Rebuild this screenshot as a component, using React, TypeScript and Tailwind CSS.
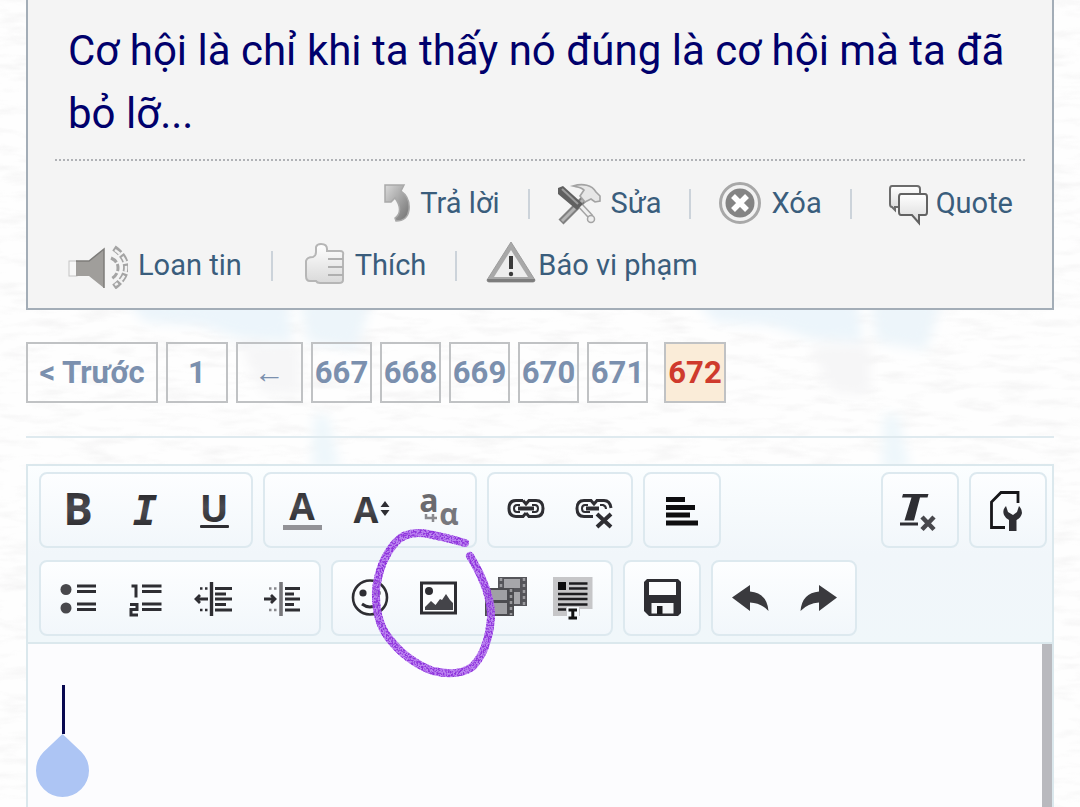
import React from "react";

const INK = "#2e2e33";

function PaperBackground() {
  return (
    <svg aria-hidden="true" className="pointer-events-none absolute inset-0 h-full w-full">
      <defs>
        <filter id="fibre" x="0" y="0" width="100%" height="100%">
          <feTurbulence type="fractalNoise" baseFrequency="0.026 0.11" numOctaves="3" seed="7" />
          <feColorMatrix values="0 0 0 0 0.6  0 0 0 0 0.59  0 0 0 0 0.6  1 0 0 0 -0.46" />
        </filter>
        <filter id="soft" x="-20%" y="-20%" width="140%" height="140%">
          <feGaussianBlur stdDeviation="6" />
        </filter>
      </defs>
      <rect width="100%" height="100%" fill="#fefefe" />
      <rect width="100%" height="100%" filter="url(#fibre)" opacity="0.4" />
      {[0, 570].map((dx) => (
        <g key={dx} transform={`translate(${dx} 0)`} filter="url(#soft)">
          <path d="M125 300H288L292 342L240 338L200 325L145 322Z" fill="#ecf5fb" />
          <path d="M300 300H372L356 350L307 342Z" fill="#edf5fa" />
          <path d="M240 345H300V395L262 392Z" fill="#f6f6f7" />
          <path d="M314 415H328L340 470H312Z" fill="#eef7fb" />
        </g>
      ))}
    </svg>
  );
}

const shade = (
  <svg aria-hidden="true" className="absolute h-0 w-0">
    <defs>
      <linearGradient id="steel" x1="0" y1="0" x2="1" y2="1">
        <stop offset="0" stopColor="#dadada" />
        <stop offset="1" stopColor="#6f6f6f" />
      </linearGradient>
      <linearGradient id="pale" x1="0" y1="0" x2="0" y2="1">
        <stop offset="0" stopColor="#ffffff" />
        <stop offset="1" stopColor="#d9d9d9" />
      </linearGradient>
      <linearGradient id="glyph" x1="0" y1="0" x2="0" y2="1">
        <stop offset="0" stopColor="#1e1e20" />
        <stop offset="0.5" stopColor="#4a4a50" />
        <stop offset="1" stopColor="#1e1e20" />
      </linearGradient>
    </defs>
  </svg>
);

function ReplyIcon() {
  return (
    <svg aria-hidden="true" width="28" height="48" viewBox="0 0 28 48">
      <path d="M3 6H22L19 12C25 16 28 22 27 31C26 38 22 42 14 42L13 39C19 35 19 27 13 19L9 23H3Z" fill="url(#steel)" stroke="#a9a9a9" strokeWidth="1.5" />
    </svg>
  );
}

function ToolsIcon() {
  return (
    <svg aria-hidden="true" width="43" height="48" viewBox="0 0 43 48">
      <path d="M28 18L3 43" stroke="#808080" strokeWidth="7" />
      <path d="M27 19L4 42" stroke="#b4b4b4" strokeWidth="3" />
      <path d="M15 7C25 4 34 6 38 13L42 17L42 22L37 23L33 20L27 23L22 17L26 11C23 8 19 8 15 7Z" fill="#e6e6e6" stroke="#a3a3a3" strokeWidth="1.6" />
      <path d="M20 24L33 38" stroke="#a3a3a3" strokeWidth="6" />
      <path d="M20 24L33 38" stroke="#f0f0f0" strokeWidth="3" />
      <circle cx="33" cy="40" r="3.5" fill="#efefef" stroke="#a3a3a3" strokeWidth="1.5" />
      <path d="M0 9L5 7L25 25L19 31L0 15Z" fill="#606060" />
      <path d="M4 10L20 25" stroke="#9c9c9c" strokeWidth="2" />
    </svg>
  );
}

function DeleteIcon() {
  return (
    <svg aria-hidden="true" width="42" height="48" viewBox="0 0 42 48">
      <circle cx="21" cy="24" r="19.5" fill="#f2f2f2" stroke="#a8a8a8" strokeWidth="3" />
      <circle cx="21" cy="24" r="14.5" fill="#848484" />
      <path d="M14 17L28 31M28 17L14 31" stroke="#fff" strokeWidth="5.5" />
    </svg>
  );
}

function QuoteIcon() {
  return (
    <svg aria-hidden="true" width="48" height="48" viewBox="0 0 48 48">
      <path d="M12 7H37Q40 7 40 10V28H15L15 31L12 28Q10 28 10 25V10Q10 7 12 7Z" fill="url(#pale)" stroke="#6c6c6c" strokeWidth="2" />
      <path d="M21 15H45Q47 15 47 18V33Q47 36 45 36H39V44L32 36H21Q19 36 19 33V18Q19 15 21 15Z" fill="url(#pale)" stroke="#626262" strokeWidth="2" />
    </svg>
  );
}

function SpeakerIcon() {
  return (
    <svg aria-hidden="true" width="60" height="48" viewBox="0 0 60 48">
      <rect x="1" y="20" width="8" height="15" fill="#f7f7f7" stroke="#c4c4c4" />
      <path d="M8 20H21L36 8V47L21 35H8Z" fill="#a09e9b" />
      <path d="M8 20H21L36 8V47" fill="none" stroke="#7d7c7a" strokeWidth="1.5" />
      <g fill="none" stroke="#a4a4a4">
        <path d="M43 17Q50 20 50 27Q50 34 43 38" strokeWidth="3" strokeDasharray="7 2" />
        <path d="M46 7Q59 16 58 28Q57 38 46 46" strokeWidth="6" strokeDasharray="8 2" />
        <path d="M47 9Q59 17 58 28Q57 38 47 44" strokeWidth="2.5" stroke="#f2f2f2" strokeDasharray="6 4" />
      </g>
    </svg>
  );
}

function ThumbIcon() {
  return (
    <svg aria-hidden="true" width="43" height="48" viewBox="0 0 43 48">
      <path d="M4 20Q5 16 11 16Q14 15 14 11V6Q15 3 19 3Q25 3 25 8V10H38Q42 10 41 14V39Q41 42 37 42H18Q15 42 14 40H8Q4 40 4 35Z" fill="url(#pale)" stroke="#b6b6b6" strokeWidth="2" />
      <path d="M26 18H41M26 26H41M26 34H41" stroke="#b0b0b0" strokeWidth="2" />
    </svg>
  );
}

function WarningIcon() {
  return (
    <svg aria-hidden="true" width="50" height="48" viewBox="0 0 50 48">
      <path d="M25 1L49 39Q49 41 47 41H3Q1 41 1 39Z" fill="#a8a8a8" stroke="#9c9c9c" strokeWidth="1" />
      <path d="M1 38H49Q49 41 47 41H3Q1 41 1 38Z" fill="#7d7d7d" />
      <path d="M25 9L42 36H8Z" fill="#ededed" />
      <path d="M25 15V28" stroke="#3a3a3a" strokeWidth="4" />
      <circle cx="25" cy="33" r="2.2" fill="#3a3a3a" />
    </svg>
  );
}

function Action({ icon, label, gap = "gap-2.5" }: { icon: React.ReactNode; label: string; gap?: string }) {
  return (
    <a href="#" className={`flex items-center ${gap}`}>
      {icon}
      <span>{label}</span>
    </a>
  );
}

const Divider = () => <span className="mt-0.5 h-[30px] w-0.5 bg-[#ccd3da]" />;

function PageLink({ children, className }: { children: React.ReactNode; className: string }) {
  return (
    <a href="#" className={`flex h-[61px] items-center justify-center border-2 border-[#c0c2c4] pt-0.5 ${className}`}>
      {children}
    </a>
  );
}

function Tool({ label, children }: { label: string; children: React.ReactNode }) {
  return (
    <button type="button" aria-label={label} className="block h-[72px] w-[68px]">
      <svg aria-hidden="true" width="68" height="72" viewBox="0 0 68 72" fill={INK} fontFamily="'Open Sans', sans-serif" fontWeight="700">
        {children}
      </svg>
    </button>
  );
}

function Group({ children }: { children: React.ReactNode }) {
  return (
    <div className="flex rounded-lg border-2 border-[#dde9ef] bg-linear-to-b from-[#fdfeff] to-[#f2f7fb] px-[3px]">
      {children}
    </div>
  );
}

export default function App() {
  return (
    <div className="relative flex h-screen flex-col overflow-hidden px-[26px] font-[Roboto,sans-serif]">
      <PaperBackground />
      {shade}

      <article className="relative border-2 border-t-0 border-[#a3adb7] bg-[#f4f4f4] px-[27px] pt-[19px] pb-[19px]">
        <p className="px-[13px] text-[42px] leading-[63px] text-[#00006c]">
          Cơ hội là chỉ khi ta thấy nó đúng là cơ hội mà ta đã bỏ lỡ...
        </p>
        <div className="mt-3.5 flex flex-col gap-3.5 border-t-2 border-dotted border-[#b0b2b6] pt-[18px] pr-3 pl-[13px] text-[29px] leading-12 text-[#3a5d7c]">
          <div className="flex items-center justify-end gap-7">
            <Action icon={<ReplyIcon />} label="Trả lời" />
            <Divider />
            <Action icon={<ToolsIcon />} label="Sửa" />
            <Divider />
            <Action icon={<DeleteIcon />} label="Xóa" />
            <Divider />
            <Action icon={<QuoteIcon />} label="Quote" gap="gap-2" />
          </div>
          <div className="flex items-center gap-[29px]">
            <Action icon={<SpeakerIcon />} label="Loan tin" />
            <Divider />
            <Action icon={<ThumbIcon />} label="Thích" />
            <Divider />
            <Action icon={<WarningIcon />} label="Báo vi phạm" gap="gap-0.5" />
          </div>
        </div>
      </article>

      <nav aria-label="Trang" className="relative mt-8 flex gap-2 text-[31px] font-bold text-[#7b90ae]">
        <PageLink className="w-[132px]">&lt; Trước</PageLink>
        <PageLink className="w-[62px]">1</PageLink>
        <PageLink className="w-[67px] font-normal">←</PageLink>
        <PageLink className="w-[61px]">667</PageLink>
        <PageLink className="w-[61px]">668</PageLink>
        <PageLink className="w-[61px]">669</PageLink>
        <PageLink className="w-[61px]">670</PageLink>
        <PageLink className="w-[61px]">671</PageLink>
        <PageLink className="ml-2 w-[62px] bg-[#faecd8] text-[#cf3a2c]">672</PageLink>
      </nav>

      <hr className="relative mt-[33px] border-t-2 border-[#dfeaef]" />

      <section className="relative mt-[26px] flex min-h-0 flex-1 flex-col border-2 border-b-0 border-[#dbe8ed]">
        <div className="flex flex-col gap-3 border-b-2 border-[#dbe8ed] bg-linear-to-b from-[#fbfeff] via-[#f1f6fa] to-[#f0f7fa] pt-1.5 pr-[5px] pb-1.5 pl-[11px]">
          <div className="flex gap-2.5">
            <Group>
              <Tool label="Bold">
                <text x="34" y="51" fontSize="44" textAnchor="middle" fill="url(#glyph)">B</text>
              </Tool>
              <Tool label="Italic">
                <text x="33" y="51" fontSize="41" textAnchor="middle" fontFamily="'DejaVu Sans Mono', monospace" fontStyle="italic" fill="url(#glyph)">I</text>
              </Tool>
              <Tool label="Underline">
                <text x="34" y="48" fontSize="38" textAnchor="middle" fill="url(#glyph)">U</text>
                <rect x="20" y="51" width="29" height="3" rx="1" />
              </Tool>
            </Group>
            <Group>
              <Tool label="Text colour">
                <text x="34" y="46" fontSize="37" textAnchor="middle" fill="url(#glyph)">A</text>
                <rect x="15" y="51" width="39" height="5" fill="#929297" />
              </Tool>
              <Tool label="Font size">
                <text x="30" y="49" fontSize="36" textAnchor="middle" fill="url(#glyph)">A</text>
                <path d="M49 27L53.5 33H44.5ZM49 42L53.5 36H44.5Z" />
              </Tool>
              <Tool label="Font family">
                <text x="25" y="38" fontSize="32" textAnchor="middle" fill="#6a6a6e">a</text>
                <text x="45" y="51" fontSize="30" textAnchor="middle" fill="#77777c">α</text>
                <path d="M22 40V44H33M29 40V48" fill="none" stroke="#8a8a8e" strokeWidth="2.5" />
              </Tool>
            </Group>
            <Group>
              <Tool label="Link">
                <g fill="none" stroke={INK} strokeWidth="3">
                  <path d="M31 26.5H24Q17 26.5 17 34.5Q17 42.5 24 42.5H31L34 39M31 26.5L34 30L37 26.5H44Q51 26.5 51 34.5Q51 42.5 44 42.5H37L34 39" />
                  <path d="M28 31H25Q22 31 22 34.5Q22 38 25 38H28M40 31H43Q46 31 46 34.5Q46 38 43 38H40" strokeWidth="2" />
                  <path d="M26 34.5H42" strokeWidth="4" />
                </g>
              </Tool>
              <Tool label="Unlink">
                <g fill="none" stroke={INK} strokeWidth="3">
                  <path d="M33 42.5H24Q17 42.5 17 34.5Q17 26.5 24 26.5H31L34 30L37 26.5H44Q50 26.5 51 34" />
                  <path d="M28 31H25Q22 31 22 34.5Q22 38 25 38H30M40 31H43Q46 32 46 35" strokeWidth="2" />
                  <path d="M26 34.5H39" strokeWidth="4" />
                  <path d="M37 40L51 53M51 40L37 53" strokeWidth="4" />
                </g>
              </Tool>
            </Group>
            <Group>
              <Tool label="Alignment">
                <path d="M18 23H37V28H18ZM18 31H47V36H18ZM18 38.5H42V43.5H18ZM18 46.5H50V51.5H18Z" fill="#0e0e10" />
              </Tool>
            </Group>
            <div className="ml-auto flex gap-2.5">
              <Group>
                <Tool label="Remove formatting">
                  <path d="M17 20H42.5L41.5 23.5H34L28 46.5H18.5L25.5 23.5H16Z" />
                  <rect x="14" y="48.5" width="18" height="3" />
                  <path d="M36 43L48 55.5M48 43L36 55.5" stroke="#48484d" strokeWidth="4.5" />
                </Tool>
              </Group>
              <Group>
                <Tool label="Editor mode">
                  <path d="M31 53.5H17.5V28L27 18.5H44V29" fill="none" stroke="#17171a" strokeWidth="2.8" />
                  <path d="M32 32Q28 36 30 41Q32 45 35 46V57H42.5V46Q47 44 48 39Q48 35 45 32L43 38L39 41L34 38Z" />
                </Tool>
              </Group>
            </div>
          </div>

          <div className="flex gap-2.5">
            <Group>
              <Tool label="Bullet list">
                <circle cx="22" cy="27.5" r="5.5" fill="#48484c" />
                <circle cx="22" cy="46" r="5.5" fill="#48484c" />
                <path d="M33 24H52M33 29.5H52M33 42H52M33 47.5H52" stroke={INK} strokeWidth="2.8" />
              </Tool>
              <Tool label="Numbered list">
                <path d="M19.5 24H24V35.5M18 42.5H25V47.5H19V53H26" fill="none" stroke={INK} strokeWidth="3" />
                <path d="M30 24H49.5M30 29.5H49.5M30 42H49.5M30 47.5H49.5" stroke={INK} strokeWidth="2.8" />
              </Tool>
              <Tool label="Outdent">
                <path d="M31.5 20V54" stroke={INK} strokeWidth="3.4" />
                <path d="M35 26.5H52M35 32H46M35 37H52M35 42.5H46M35 48H52" stroke={INK} strokeWidth="2.8" />
                <path d="M18 37H28M20 33L16 37L20 41" fill="none" stroke={INK} strokeWidth="2.8" />
                <path d="M20 26.5H22.5M25 26.5H27.5M20 48H22.5M25 48H27.5" stroke={INK} strokeWidth="2.5" />
              </Tool>
              <Tool label="Indent">
                <path d="M33 20V54" stroke="#77777b" strokeWidth="3.6" />
                <path d="M37 26.5H52M37 32H46M37 37H52M37 42.5H46M37 48H52" stroke={INK} strokeWidth="2.8" />
                <path d="M16 37H26M23 33L27 37L23 41" fill="none" stroke={INK} strokeWidth="2.8" />
                <path d="M21 26.5H23.5M26 26.5H28.5M21 48H23.5M26 48H28.5" stroke="#88888c" strokeWidth="2.5" />
              </Tool>
            </Group>
            <Group>
              <Tool label="Smilies">
                <circle cx="34" cy="35.5" r="17" fill="#fafcfd" stroke={INK} strokeWidth="2.6" />
                <circle cx="27" cy="31" r="3.6" />
                <circle cx="41" cy="31" r="3.6" />
                <path d="M26 42Q34 48 42 42" fill="none" stroke={INK} strokeWidth="3" />
              </Tool>
              <Tool label="Image">
                <rect x="17.5" y="21" width="34" height="30" fill="#fcfdfe" stroke={INK} strokeWidth="3" />
                <circle cx="25" cy="29" r="4" />
                <path d="M21 48V45L27 39L31.5 43L36 37L38 38L42 32L46 38L49 41V48Z" fill="#444449" />
              </Tool>
              <Tool label="Media">
                <rect x="26" y="15" width="29" height="29" fill="#55555a" />
                <path d="M32 17H48V26H32ZM32 30H48V42H32Z" fill="#a6a6aa" />
                <path d="M29 16V43M52 16V43" stroke="#9c9ca0" strokeWidth="2.5" strokeDasharray="3 3" />
                <rect x="13" y="26" width="29" height="28" fill="#4c4c50" />
                <path d="M19 28H35V38H19ZM19 41H35V52H19Z" fill="#a0a0a4" />
                <path d="M16 27V53M39 27V53" stroke="#98989c" strokeWidth="2.5" strokeDasharray="3 3" />
              </Tool>
              <Tool label="Quote block">
                <path d="M13 15H52.5V47H40V54H13Z" fill="#c6c6c8" />
                <path d="M18 20H26V28H18Z" fill="#0c0c0e" />
                <path d="M29 21.5H47.5M29 26.5H47.5M18 32H47.5M18 37H47.5M18 42.5H47.5M18 47.5H26" stroke="#1c1c1f" strokeWidth="2.6" />
                <path d="M27 45H39V57H27Z" fill="#f4f8fb" />
                <path d="M28.5 48H37M32.8 48V56M28.5 56H37" stroke="#111" strokeWidth="3" />
              </Tool>
            </Group>
            <Group>
              <Tool label="Drafts">
                <path d="M19 17H50L53 20V51L50 54H21L16 49V20Z" />
                <path d="M21 20H48V33H21Z" fill="#fcfdfe" />
                <path d="M23.5 41H45.5V51.5H23.5Z" fill="#f4f6f8" />
                <path d="M29 44H34.5V52H29Z" fill="#1c1c1f" />
              </Tool>
            </Group>
            <Group>
              <Tool label="Undo">
                <path d="M16 35.5L34 23V29.5Q51 31 52.5 49Q45 41 34 40.5V49Z" fill="#3a3a3e" />
              </Tool>
              <Tool label="Redo">
                <path d="M53 35.5L35 23V29.5Q18 31 16.5 49Q24 41 35 40.5V49Z" fill="#3a3a3e" />
              </Tool>
            </Group>
          </div>
        </div>

        <div className="relative flex flex-1 bg-[#fcfcfe]">
          <textarea aria-label="Nội dung bài viết" className="flex-1 resize-none bg-transparent px-[34px] py-10 text-[42px] text-[#00006c] outline-none" />
          <span className="w-2.5 bg-[#b9b9be]" />
          <span className="absolute top-[41px] left-[34px] h-[49px] w-[3px] bg-[#080850]" />
          <svg aria-hidden="true" width="54" height="64" viewBox="0 0 54 64" className="absolute top-[90px] left-2">
            <path d="M26.5 0L45.5 18A26.5 26.5 0 1 1 7.5 18Z" fill="#adc5f4" />
          </svg>
        </div>

        <svg aria-hidden="true" width="136" height="160" viewBox="366 524 136 160" className="pointer-events-none absolute top-[58px] left-[338px]">
          <defs>
            <filter id="crayon" x="-5%" y="-5%" width="110%" height="110%">
              <feTurbulence type="fractalNoise" baseFrequency="0.6" numOctaves="2" seed="3" result="n" />
              <feColorMatrix in="n" values="0 0 0 0 0  0 0 0 0 0  0 0 0 0 0  -5 0 0 0 2.9" result="m" />
              <feComposite in="SourceGraphic" in2="m" operator="in" />
            </filter>
          </defs>
          <g fill="none" strokeLinecap="round">
            <path d="M465 543Q444 537 428 534Q406 530 395 543Q379 562 376 590Q375 620 388 637Q406 661 433 671Q458 677 472 667Q488 652 491 618Q492 592 470 556" stroke="#b577ee" strokeWidth="8" opacity="0.9" />
            <path d="M465 543Q444 537 428 534Q406 530 395 543Q379 562 376 590Q375 620 388 637Q406 661 433 671Q458 677 472 667Q488 652 491 618Q492 592 470 556" stroke="#8f35dc" strokeWidth="8" filter="url(#crayon)" />
          </g>
        </svg>
      </section>
    </div>
  );
}
